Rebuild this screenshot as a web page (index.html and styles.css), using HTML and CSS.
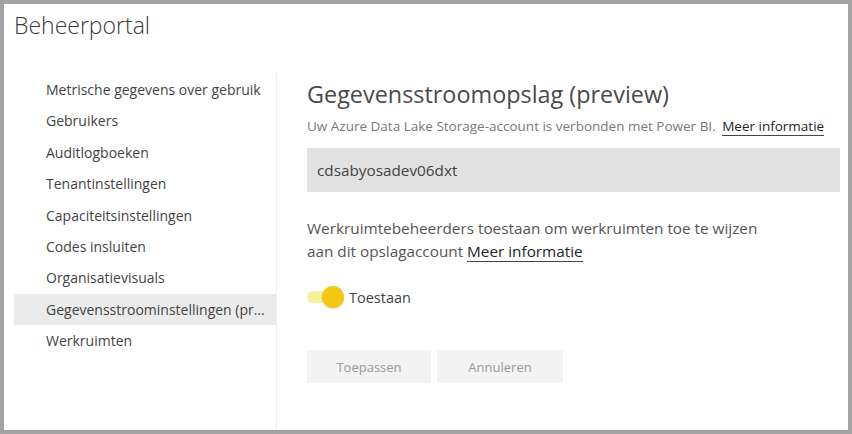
FILE: index.html
```html
<!DOCTYPE html>
<html lang="nl">
<head>
<meta charset="utf-8">
<title>Beheerportal</title>
<link rel="stylesheet" href="styles.css">
</head>
<body>
<div class="frame">
  <header class="top">
    <h1 class="title">Beheerportal</h1>
  </header>
  <div class="main">
    <nav class="side">
      <a class="nav-item">Metrische gegevens over gebruik</a>
      <a class="nav-item">Gebruikers</a>
      <a class="nav-item">Auditlogboeken</a>
      <a class="nav-item">Tenantinstellingen</a>
      <a class="nav-item">Capaciteitsinstellingen</a>
      <a class="nav-item">Codes insluiten</a>
      <a class="nav-item">Organisatievisuals</a>
      <a class="nav-item active">Gegevensstroominstellingen (preview)</a>
      <a class="nav-item">Werkruimten</a>
    </nav>
    <section class="content">
      <h2 class="heading">Gegevensstroomopslag (preview)</h2>
      <p class="sub">Uw Azure Data Lake Storage-account is verbonden met Power BI. <a class="link">Meer informatie</a></p>
      <div class="field">cdsabyosadev06dxt</div>
      <p class="desc">Werkruimtebeheerders toestaan om werkruimten toe te wijzen<br>aan dit opslagaccount <a class="link">Meer informatie</a></p>
      <div class="toggle-row">
        <span class="toggle"><span class="knob"></span></span>
        <span class="toggle-label">Toestaan</span>
      </div>
      <div class="buttons">
        <button class="btn">Toepassen</button>
        <button class="btn">Annuleren</button>
      </div>
    </section>
  </div>
</div>
</body>
</html>
```

FILE: styles.css
```css
* { box-sizing: border-box; }
html, body { margin: 0; padding: 0; }
body {
  font-family: "Open Sans", "Noto Sans", sans-serif;
  background: #a3a3a3;
}
.frame {
  width: 852px;
  height: 434px;
  border: 4px solid #a3a3a3;
  background: #fff;
  display: flex;
  flex-direction: column;
  overflow: hidden;
}
.top { height: 69px; padding: 4px 0 0 10px; }
.title {
  margin: 0;
  font-weight: 300;
  font-size: 23px;
  line-height: 34px;
  color: #3b3b3b;
}
.main { flex: 1; display: flex; }
.side {
  width: 273px;
  padding: 1px 0 0 10px;
  border-right: 1px solid #efefef;
  display: flex;
  flex-direction: column;
}
.nav-item {
  height: 31.4px;
  line-height: 31.4px;
  padding: 0 10px 0 32px;
  font-size: 14px;
  color: #444;
  white-space: nowrap;
  overflow: hidden;
  text-overflow: ellipsis;
}
.nav-item.active { background: #ebebeb; }
.content { flex: 1; padding: 5px 0 0 30px; }
.heading {
  margin: 0;
  font-weight: 400;
  font-size: 23.4px;
  line-height: 32px;
  color: #4a4a4a;
}
.sub {
  margin: 6px 0 0;
  font-size: 13.5px;
  line-height: 20px;
  color: #7a7a7a;
}
.link {
  color: #252525;
  text-decoration: none;
  border-bottom: 1px solid #444;
}
.sub .link { margin-left: 3px; }
.field {
  margin-top: 12px;
  width: 533px;
  height: 44px;
  background: #e1e1e1;
  padding-left: 10px;
  line-height: 44px;
  font-size: 15.3px;
  color: #444;
}
.desc {
  margin: 25px 0 0;
  font-size: 15.3px;
  line-height: 23px;
  color: #555;
}
.toggle-row {
  margin-top: 23px;
  display: flex;
  align-items: center;
  height: 22px;
}
.toggle {
  position: relative;
  width: 37px;
  height: 22px;
  display: inline-block;
}
.toggle::before {
  content: "";
  position: absolute;
  left: 0;
  top: 5px;
  width: 30px;
  height: 12px;
  border-radius: 6px;
  background: #f9f09c;
}
.knob {
  position: absolute;
  left: 15px;
  top: 0;
  width: 22px;
  height: 22px;
  border-radius: 50%;
  background: #f2c811;
  box-shadow: 0 1px 2px rgba(0,0,0,0.15);
}
.toggle-label {
  margin-left: 5px;
  font-size: 14.5px;
  color: #444;
}
.buttons {
  margin-top: 42px;
  display: flex;
  gap: 6px;
}
.btn {
  width: 124px;
  height: 33px;
  border: none;
  background: #f3f3f3;
  font-family: inherit;
  font-size: 13px;
  color: #9a9a9a;
  padding: 0;
}
.btn + .btn { width: 126px; }
```
